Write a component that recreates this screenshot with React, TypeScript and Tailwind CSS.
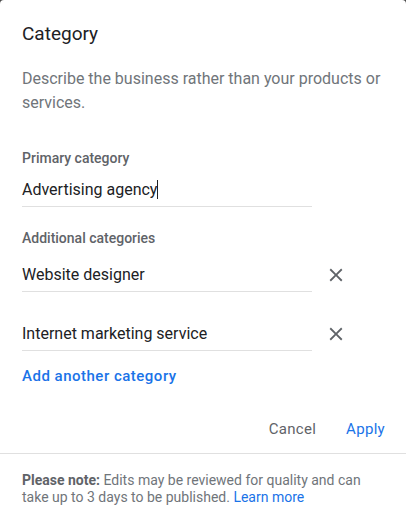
import type { ReactNode } from 'react'

function CloseIcon() {
  return (
    <svg width="22" height="22" viewBox="0 0 24 24" className="text-[#5f6368]">
      <path
        fill="currentColor"
        d="M19 6.41L17.59 5 12 10.59 6.41 5 5 6.41 10.59 12 5 17.59 6.41 19 12 13.41 17.59 19 19 17.59 13.41 12z"
      />
    </svg>
  )
}

function Label({ children, className = '' }: { children: ReactNode; className?: string }) {
  return (
    <div className={`text-[14px] leading-[20px] font-medium text-[#5f6368] ${className}`}>{children}</div>
  )
}

function CategoryField({
  value,
  removable,
  cursor,
  className = '',
}: {
  value: string
  removable?: boolean
  cursor?: boolean
  className?: string
}) {
  return (
    <div className={`flex items-start ${className}`}>
      <div className="w-[290px] border-b border-[#e0e0e0] pb-[4px] text-[16px] leading-[24px] text-[#202124]">
        {value}
        {cursor && <span className="inline-block w-px h-[19px] bg-[#202124] align-[-4px]" />}
      </div>
      {removable && (
        <button className="ml-[13px] h-6 flex items-center">
          <CloseIcon />
        </button>
      )}
    </div>
  )
}

export default function App() {
  return (
    <div className="h-[511px] bg-[#4a4a4a]" style={{ fontFamily: 'Roboto, "Liberation Sans", sans-serif' }}>
      <div className="h-full bg-white rounded-t-[4px] flex flex-col">
        <div className="px-[22px] pt-[22px]">
          <h2 className="text-[19px] leading-[24px] font-normal text-[#202124]">Category</h2>
          <p className="mt-[21px] text-[16px] leading-[24px] text-[#70757a]">
            Describe the business rather than your products or services.
          </p>

          <Label className="mt-[33px]">Primary category</Label>
          <CategoryField className="mt-[10px]" value="Advertising agency" cursor />

          <Label className="mt-[21px]">Additional categories</Label>
          <CategoryField className="mt-[15px]" value="Website designer" removable />
          <CategoryField className="mt-[30px]" value="Internet marketing service" removable />

          <button className="mt-[15px] block text-[15px] leading-[20px] font-medium tracking-[0.5px] text-[#1a73e8]">
            Add another category
          </button>
        </div>

        <div className="mt-[33px] flex justify-end gap-[30px] pr-[21px]">
          <button className="text-[15px] leading-[20px] tracking-[0.3px] text-[#5f6368]">Cancel</button>
          <button className="text-[15px] leading-[20px] tracking-[0.3px] text-[#1a73e8]">Apply</button>
        </div>

        <div className="mt-[14px] border-t border-[#e0e0e0] px-[22px] pt-[18px]">
          <p className="text-[14px] leading-[17px] text-[#70757a]">
            <span className="font-bold text-[#5f6368]">Please note:</span> Edits may be reviewed for quality and
            can take up to 3 days to be published. <a className="text-[#1a73e8]">Learn more</a>
          </p>
        </div>
      </div>
    </div>
  )
}
